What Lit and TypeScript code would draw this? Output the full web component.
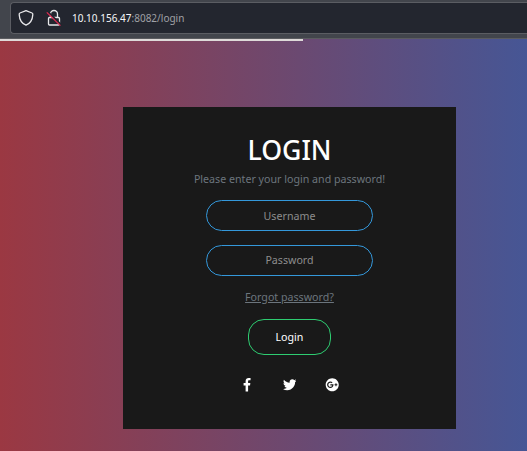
import { LitElement, html, css } from "lit";
import { customElement } from "lit/decorators.js";

@customElement("browser-bar")
class BrowserBar extends LitElement {
  static styles = css`
    :host { display: block; box-sizing: border-box; height: 39px; padding: 2px 0 0 10px; background: #42454c; border-bottom: 1px solid #5b5c60; }
    .field { box-sizing: border-box; height: 32px; display: flex; align-items: center; padding-left: 7px; background: #23262f; border: 1px solid #5b5d63; border-right: 0; border-radius: 4px 0 0 4px; }
    svg { display: block; fill: none; flex: none; }
    .lock { margin-left: 12px; }
    .url { margin-left: 10px; font: 10px/16px "Noto Sans", sans-serif; color: #a0a1a6; white-space: nowrap; }
    .host { color: #f6f6f8; }
  `;
  render() {
    return html`<div class="field">
      <svg width="16" height="18" viewBox="0 0 16 18"><path d="M8 1.6 L14 4 C14.8 4.3 14.9 4.8 14.8 5.6 C14.5 11 12 14.5 8 16.2 C4 14.5 1.5 11 1.2 5.6 C1.1 4.8 1.2 4.3 2 4 Z" stroke="#e8e8ea" stroke-width="1.3" stroke-linejoin="round"/></svg>
      <svg class="lock" width="16" height="18" viewBox="0 0 16 18">
        <path d="M4.5 8.5V5a3.5 3.5 0 0 1 7 0V8.5M3.5 8.5h9q1 0 1 1v5.5q0 1-1 1h-9q-1 0-1-1v-5.5q0-1 1-1z" stroke="#e8e8ea" stroke-width="1.3"/>
        <path d="M2 2.8 15.4 16" stroke="#23262f" stroke-width="1.8"/>
        <path d="M0.8 3.4 14.4 16.6" stroke="#e22850" stroke-width="1.3"/>
      </svg>
      <span class="url"><span class="host">10.10.156.47</span>:8082/login</span>
    </div>`;
  }
}

@customElement("login-card")
class LoginCard extends LitElement {
  static styles = css`
    :host { box-sizing: border-box; display: flex; flex-direction: column; align-items: center; width: 333px; height: 322px; padding-top: 27px; background: #191919; color: #fff; font: 10.67px/16px "Noto Sans", sans-serif; }
    h1 { margin: 0; font-size: 26.67px; line-height: 32px; font-weight: 500; }
    p { margin: 5px 0 0; color: #6c757d; }
    input { box-sizing: border-box; width: 167px; height: 31px; margin: 13px 0 0; padding: 0 7px; background: none; border: 1px solid #3498db; border-radius: 16px; text-align: center; color: #fff; font: inherit; outline: none; }
    input + input { margin-top: 14px; padding-bottom: 2px; }
    input::placeholder { color: #8d8d8d; opacity: 1; }
    a { color: #6c757d; margin-top: 13px; text-decoration: underline; }
    button { box-sizing: border-box; width: 83px; height: 36px; margin-top: 14px; padding: 0; background: none; border: 1px solid #2ecc71; border-radius: 16px; color: #fff; font: inherit; }
    .social { display: flex; margin-top: 23px; gap: 29px; }
    svg { display: block; width: 13.5px; height: 13.5px; fill: #fff; }
  `;
  render() {
    return html`
      <h1>LOGIN</h1>
      <p>Please enter your login and password!</p>
      <input type="text" placeholder="Username" />
      <input type="password" placeholder="Password" />
      <a>Forgot password?</a>
      <button>Login</button>
      <div class="social">
        <svg viewBox="-136 0 512 512"><path d="M76.7 512V283H0v-91h76.7v-71.7C76.7 42.4 124.3 0 193.8 0c33.3 0 61.9 2.5 70.2 3.6V85h-48.2c-37.8 0-45.1 18-45.1 44.3V192H256l-11.7 91h-73.6v229"/></svg>
        <svg viewBox="0 0 512 512"><path d="M459.37 151.716c.325 4.548.325 9.097.325 13.645 0 138.72-105.583 298.558-298.558 298.558-59.452 0-114.68-17.219-161.137-47.106 8.447.974 16.568 1.299 25.34 1.299 49.055 0 94.213-16.568 130.274-44.832-46.132-.975-84.792-31.188-98.112-72.772 6.498.974 12.995 1.624 19.818 1.624 9.421 0 18.843-1.3 27.614-3.573-48.081-9.747-84.143-51.98-84.143-102.985v-1.299c13.969 7.797 30.214 12.67 47.431 13.319-28.264-18.843-46.781-51.005-46.781-87.391 0-19.492 5.197-37.36 14.294-52.954 51.655 63.675 129.3 105.258 216.365 109.807-1.624-7.797-2.599-15.918-2.599-24.04 0-57.828 46.782-104.934 104.934-104.934 30.213 0 57.502 12.67 76.67 33.137 23.715-4.548 46.456-13.32 66.599-25.34-7.798 24.366-24.366 44.833-46.132 57.827 21.117-2.273 41.584-8.122 60.426-16.243-14.292 20.791-32.161 39.308-52.628 54.253z"/></svg>
        <svg viewBox="-26 0 512 512" overflow="visible"><path d="M248 8C111.1 8 0 119.1 0 256s111.1 248 248 248 248-111.1 248-248S384.9 8 248 8zm-70.7 372c-68.8 0-124-55.5-124-124s55.2-124 124-124c31.3 0 60.1 11 83 32.3l-33.6 32.6c-13.2-12.9-31.3-19.1-49.4-19.1-42.9 0-77.2 35.5-77.2 78.1s34.2 78.1 77.2 78.1c32.6 0 64.9-19.1 70.1-53.3h-70.1v-42.6h116.9c1.3 6.8 1.9 13.6 1.9 20.7 0 70.8-47.5 121.2-118.8 121.2zm230.2-106.2v35.5H372v-35.5h-35.5v-35.5H372v-35.5h35.5v35.5h35.2v35.5h-35.2z"/></svg>
      </div>`;
  }
}

@customElement("app-root")
class AppRoot extends LitElement {
  static styles = css`
    :host { display: flex; flex-direction: column; height: 451px; overflow: hidden; }
    .page { flex: 1; background: linear-gradient(to right, #9b3842, #465695); }
    .progress { width: 303px; height: 2px; background: #dedad9; }
    login-card { margin: 66px 0 0 123px; }
  `;
  render() {
    return html`<browser-bar></browser-bar>
      <div class="page"><div class="progress"></div><login-card></login-card></div>`;
  }
}
